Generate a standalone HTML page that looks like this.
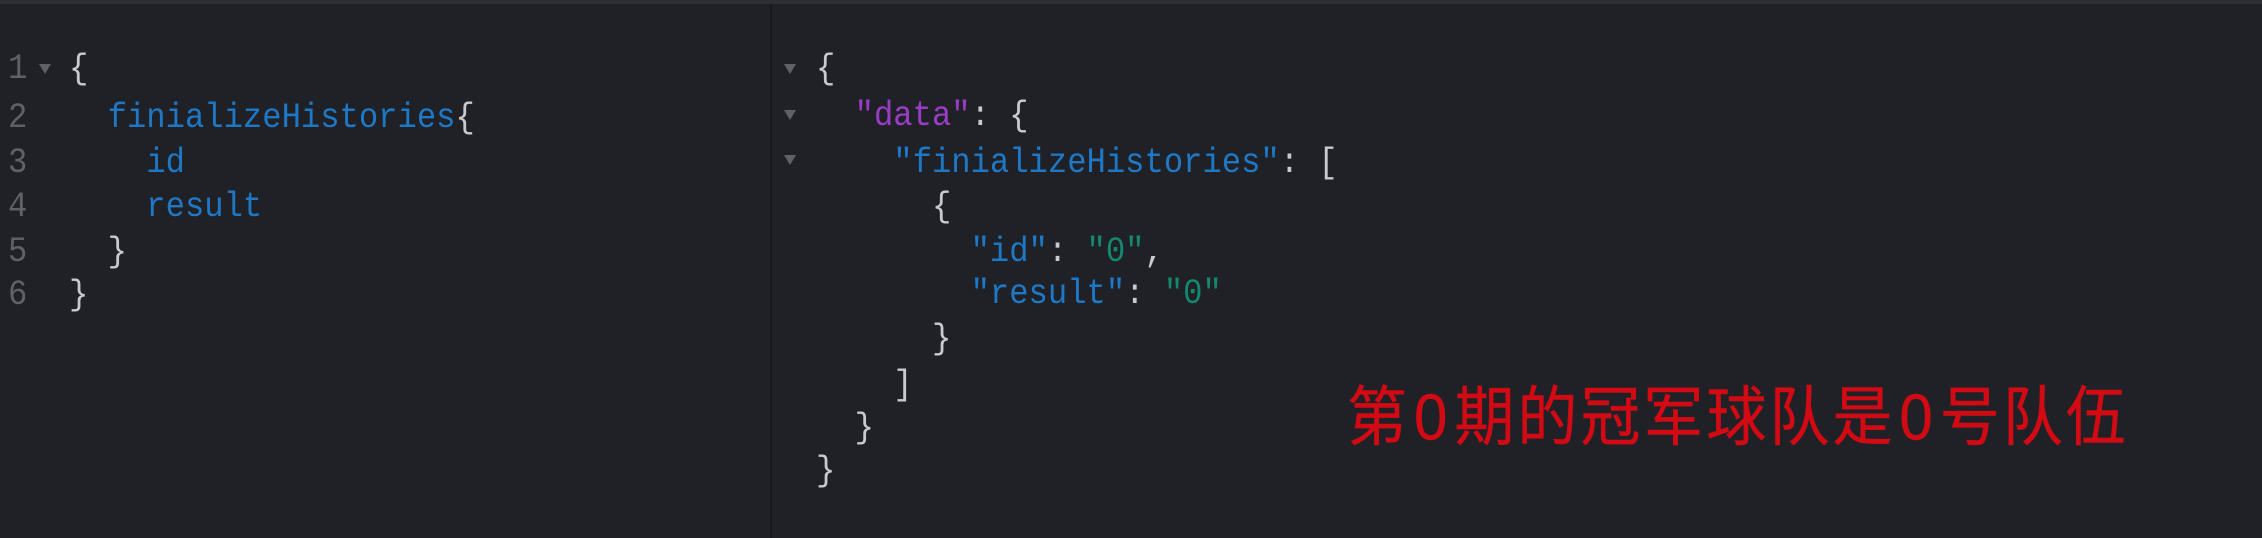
<!DOCTYPE html>
<html><head><meta charset="utf-8"><style>
html,body{margin:0;padding:0;}
body{width:2262px;height:538px;background:#1f2126;position:relative;overflow:hidden;font-family:"Liberation Mono",monospace;font-size:35px;}
.top{position:absolute;left:0;top:0;width:2262px;height:4px;background:#2c2f35;}
.div{position:absolute;left:770px;top:4px;width:2px;height:534px;background:#16181b;}
.l{position:absolute;white-space:pre;line-height:44px;height:44px;color:#c8cacd;transform:scaleX(0.92);transform-origin:0 0;}
.n{color:#5f6165;}
.k{color:#1f78c6;}
.p{color:#9a3dc6;}
.s{color:#14896f;}
.t{position:absolute;width:0;height:0;border-left:6px solid transparent;border-right:6px solid transparent;border-top:10px solid #5f6165;}
.red{position:absolute;left:1347px;top:383px;color:#d20a14;font-family:"Liberation Sans","Noto Sans CJK SC",sans-serif;font-size:60px;letter-spacing:3px;line-height:70px;white-space:pre;transform:scaleY(1.08);transform-origin:0 50%;-webkit-text-stroke:0.4px #d20a14;}
.z{margin:0 4px;}
</style></head><body>
<div class="top"></div>
<div class="div"></div>

<div class="l n" style="left:8px;top:47px">1</div>
<div class="t" style="left:39px;top:64px"></div>
<div class="l n" style="left:8px;top:96px">2</div>
<div class="l n" style="left:8px;top:141px">3</div>
<div class="l n" style="left:8px;top:185px">4</div>
<div class="l n" style="left:8px;top:230px">5</div>
<div class="l n" style="left:8px;top:273px">6</div>

<div class="l" style="left:69px;top:47px">{</div>
<div class="l" style="left:69px;top:96px">  <span class="k">finializeHistories</span>{</div>
<div class="l" style="left:69px;top:141px">    <span class="k">id</span></div>
<div class="l" style="left:69px;top:185px">    <span class="k">result</span></div>
<div class="l" style="left:69px;top:230px">  }</div>
<div class="l" style="left:69px;top:273px">}</div>

<div class="t" style="left:784px;top:64px"></div>
<div class="t" style="left:784px;top:110px"></div>
<div class="t" style="left:784px;top:155px"></div>

<div class="l" style="left:816px;top:47px">{</div>
<div class="l" style="left:816px;top:94px">  <span class="p">"data"</span>: {</div>
<div class="l" style="left:816px;top:141px">    <span class="k">"finializeHistories"</span>: [</div>
<div class="l" style="left:816px;top:185px">      {</div>
<div class="l" style="left:816px;top:230px">        <span class="k">"id"</span>: <span class="s">"0"</span>,</div>
<div class="l" style="left:816px;top:272px">        <span class="k">"result"</span>: <span class="s">"0"</span></div>
<div class="l" style="left:816px;top:317px">      }</div>
<div class="l" style="left:816px;top:363px">    ]</div>
<div class="l" style="left:816px;top:406px">  }</div>
<div class="l" style="left:816px;top:449px">}</div>

<div class="red">第<span class="z">0</span>期的冠军球队是<span class="z">0</span>号队伍</div>
</body></html>
